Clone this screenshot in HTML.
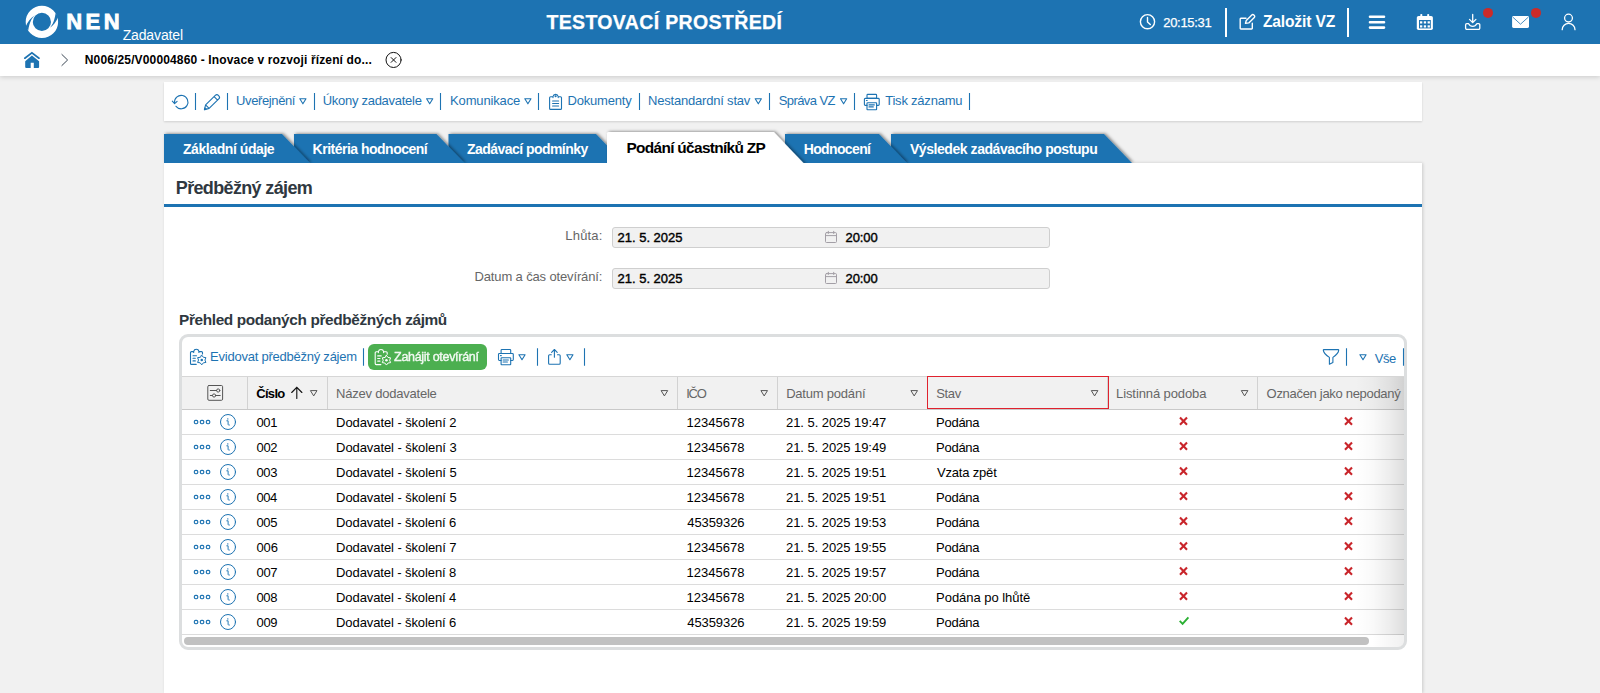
<!DOCTYPE html>
<html lang="cs"><head><meta charset="utf-8"><title>NEN - Zadavatel</title>
<style>
*{box-sizing:border-box;margin:0;padding:0}
html,body{width:1600px;height:693px;overflow:hidden}
body{background:#f1f1f1;font-family:"Liberation Sans",sans-serif;font-size:13px;color:#000;position:relative}
.t{position:absolute;white-space:nowrap;line-height:1;display:block}
.b{position:absolute}
svg.ov{position:absolute;left:0;top:0;width:1600px;height:693px;pointer-events:none}
</style></head><body>
<div class="b" style="left:0;top:44px;width:1600px;height:32px;background:#fff;box-shadow:0 1px 5px rgba(0,0,0,.17)"></div>
<div class="b" style="left:0;top:0;width:1600px;height:44px;background:#1d73b2"></div>
<div class="b" style="left:164px;top:82px;width:1258px;height:39px;background:#fff;box-shadow:0 1px 2px rgba(0,0,0,.14)"></div>
<div class="b" style="left:164px;top:163px;width:1258px;height:530px;background:#fff;box-shadow:1px 0 3px rgba(0,0,0,.16)"></div>
<div class="b" style="left:164px;top:204px;width:1258px;height:3px;background:#1d73b2"></div>
<!-- header separators + badges -->
<div class="b" style="left:1225px;top:8px;width:2px;height:28.500px;background:#fff"></div>
<div class="b" style="left:1347px;top:8px;width:2px;height:28.500px;background:#fff"></div>
<!-- form fields -->
<div class="b" style="left:612px;top:227px;width:438px;height:21px;background:#f1f1f1;border:1px solid #cfcfcf;border-radius:3px"></div>
<div class="b" style="left:612px;top:268px;width:438px;height:21px;background:#f1f1f1;border:1px solid #cfcfcf;border-radius:3px"></div>
<!-- grid -->
<div class="b" style="left:179px;top:334px;width:1228px;height:316px;border:3px solid #dcdedf;border-radius:9px;background:#fff;overflow:hidden">
  <div class="b" style="left:0;top:39px;width:1222px;height:34px;background:#f1f1f1;border-top:1px solid #d6d6d6;border-bottom:1px solid #c9c9c9"></div>
  <div class="b" style="left:65px;top:40px;width:1px;height:32px;background:#d2d2d2"></div>
  <div class="b" style="left:145px;top:40px;width:1px;height:32px;background:#d2d2d2"></div>
  <div class="b" style="left:495px;top:40px;width:1px;height:32px;background:#d2d2d2"></div>
  <div class="b" style="left:595px;top:40px;width:1px;height:32px;background:#d2d2d2"></div>
  <div class="b" style="left:925px;top:40px;width:1px;height:32px;background:#d2d2d2"></div>
  <div class="b" style="left:1075px;top:40px;width:1px;height:32px;background:#d2d2d2"></div>
  <div class="b" style="left:745px;top:39px;width:182px;height:33px;border:1px solid #e0222e"></div>
  <div class="b" style="left:0;top:97px;width:1222px;height:1px;background:#dcdcdc"></div>
  <div class="b" style="left:0;top:122px;width:1222px;height:1px;background:#dcdcdc"></div>
  <div class="b" style="left:0;top:147px;width:1222px;height:1px;background:#dcdcdc"></div>
  <div class="b" style="left:0;top:172px;width:1222px;height:1px;background:#dcdcdc"></div>
  <div class="b" style="left:0;top:197px;width:1222px;height:1px;background:#dcdcdc"></div>
  <div class="b" style="left:0;top:222px;width:1222px;height:1px;background:#dcdcdc"></div>
  <div class="b" style="left:0;top:247px;width:1222px;height:1px;background:#dcdcdc"></div>
  <div class="b" style="left:0;top:272px;width:1222px;height:1px;background:#dcdcdc"></div>
  <div class="b" style="left:0;top:297px;width:1222px;height:1px;background:#dcdcdc"></div>
  <div class="b" style="left:2px;top:300px;width:1185px;height:8px;border-radius:4px;background:#c1c1c1"></div>
  <div class="b" style="left:1174px;top:40px;width:48px;height:258px;background:linear-gradient(to right,rgba(0,0,0,0),rgba(0,0,0,.025) 35%,rgba(0,0,0,.07) 70%,rgba(0,0,0,.13))"></div>
  <div class="b" style="left:1190px;top:298px;width:32px;height:12px;background:linear-gradient(to right,rgba(0,0,0,0),rgba(0,0,0,.06))"></div>
</div>
<div class="b" style="left:367.500px;top:343.700px;width:119px;height:26.200px;background:#4caf50;border-radius:6px"></div>
<svg class="ov" viewBox="0 0 1600 693" fill="none" stroke-linecap="round" stroke-linejoin="round">
<defs>
<filter id="ts" x="-10%" y="-30%" width="130%" height="160%"><feDropShadow dx="1.5" dy="-0.5" stdDeviation="1.5" flood-color="#000" flood-opacity=".45"/></filter>
<path id="tri" d="M0 0H6.200L3.100 5Z"/>
<g id="prn"><rect x="3" y=".5" width="9.6" height="4" rx=".8"/><path d="M3 11.5H1.3a.9.9 0 0 1-.9-.9V5.4a.9.9 0 0 1 .9-.9H14.3a.9.9 0 0 1 .9.9V10.6a.9.9 0 0 1-.9.9H12.6"/><rect x="3" y="8.8" width="9.6" height="7" rx=".5"/><path d="M5 11H10.3M5 13H9.3M2.4 6.6H3.2"/></g>
<g id="xm"><path d="M0 0L7 7.200M7 0L0 7.200"/></g>
<g id="ri"><g stroke-width="1.150"><rect x="-33.700" y="-1.600" width="3.500" height="3.300" rx="1.400"/><rect x="-27.700" y="-1.600" width="3.500" height="3.300" rx="1.400"/><rect x="-21.700" y="-1.600" width="3.500" height="3.300" rx="1.400"/></g><circle cx="0" cy="0" r="7.500"/><path d="M-1.200 -1.200H.100V2.400Q.100 3.400 1.400 3.100" stroke-width=".95"/><circle cx="-.200" cy="-3.100" r=".700" fill="#1d73b2" stroke="none"/></g>
</defs>
<!-- tabs -->
<g filter="url(#ts)" fill="#1d73b2"><path d="M891 163V134H1104L1132 163Z"/></g>
<g filter="url(#ts)" fill="#1d73b2"><path d="M785 163V134H879L907 163Z"/></g>
<g filter="url(#ts)" fill="#1d73b2"><path d="M448.500 163V134H596L624 163Z"/></g>
<g filter="url(#ts)" fill="#1d73b2"><path d="M294 163V134H436.500L464.500 163Z"/></g>
<g filter="url(#ts)" fill="#1d73b2"><path d="M164 163V134H282L310 163Z"/></g>
<g filter="url(#ts)" fill="#fff"><path d="M607 165V133.500Q607 132 608.500 132H773.800L805.300 165Z"/></g>
<rect x="164" y="163" width="1258" height="6" fill="#fff"/>
<!-- logo -->
<g>
<circle cx="41.900" cy="21.900" r="12.650" stroke="#fff" stroke-width="7.100"/>
<path d="M25.40 27.20C27.50 22.00 30.50 18.00 35.00 15.20C32.00 17.60 29.60 21.50 28.20 30.60Z" fill="#1d73b2" stroke="none"/>
<path d="M58.40 16.60C56.30 21.80 53.30 25.80 48.80 28.60C51.80 26.20 54.20 22.30 55.60 13.20Z" fill="#1d73b2" stroke="none"/>
</g>
<!-- header icons -->
<g stroke="#fff" stroke-width="1.400">
<circle cx="1147.500" cy="21.700" r="7.100"/><path d="M1147.500 17.400V21.900L1150.300 24.600"/>
<path d="M1246 18.300H1240.900a.700.700 0 0 0-.700.700V28.300a.700.700 0 0 0 .700.700H1251.600a.700.700 0 0 0 .700-.700V23.200"/>
<path d="M1245.500 23.300L1246.300 20.400L1251.800 14.900a1.400 1.400 0 0 1 2 0L1254.300 15.400a1.400 1.400 0 0 1 0 2L1248.800 22.900Z"/>
</g>
<g stroke="#fff" stroke-width="2.600"><path d="M1370 16.800H1384M1370 22.200H1384M1370 27.600H1384"/></g>
<!-- calendar -->
<g fill="#fff" stroke="none"><rect x="1416.800" y="16.100" width="16.100" height="13.800" rx="1.700"/><rect x="1420.300" y="14" width="2" height="4" rx=".8"/><rect x="1427.200" y="14" width="2" height="4" rx=".8"/></g>
<rect x="1419" y="20" width="11.800" height="8.400" fill="#1d73b2"/>
<g fill="#fff" stroke="none"><rect x="1420" y="21.300" width="2.300" height="2.200"/><rect x="1423.800" y="21.300" width="2.300" height="2.200"/><rect x="1427.600" y="21.300" width="2.300" height="2.200"/><rect x="1420" y="25.300" width="2.300" height="2.200"/><rect x="1423.800" y="25.300" width="2.300" height="2.200"/><rect x="1427.600" y="25.300" width="2.300" height="2.200"/></g>
<!-- inbox download -->
<g stroke="#fff" stroke-width="1.300"><path d="M1472.700 14.500V22.400M1469.500 19.400L1472.700 22.600L1475.900 19.400"/>
<path d="M1466.800 23.700H1468.600Q1470 26.400 1472.700 26.400Q1475.400 26.400 1476.800 23.700H1478.600a1.200 1.200 0 0 1 1.200 1.200V28.100a1.200 1.200 0 0 1-1.200 1.200H1466.800a1.200 1.200 0 0 1-1.200-1.200V24.900a1.200 1.200 0 0 1 1.200-1.200Z"/></g>
<circle cx="1488" cy="12.900" r="5" fill="#cb2b29"/>
<!-- envelope -->
<rect x="1512.100" y="16" width="16.900" height="11.900" rx="1.400" fill="#fff"/>
<path d="M1513 17.300L1520.500 24.200L1528.100 17.300" stroke="#1d73b2" stroke-width=".8"/>
<circle cx="1536" cy="12.900" r="5" fill="#cb2b29"/>
<!-- user -->
<g stroke="#fff" stroke-width="1.300"><circle cx="1568.500" cy="18.100" r="3.900"/><path d="M1562.200 29.700A6.400 6.400 0 0 1 1575 29.700"/></g>
<!-- breadcrumb -->
<path d="M24.800 58.200L31.900 52.800L39 58.200" stroke="#1d73b2" stroke-width="1.700" stroke-linejoin="miter"/>
<path d="M31.900 55.600L39.100 61.200V66.900a1 1 0 0 1-1 1H33.800V62.800H30.700V67.900H26.200a1 1 0 0 1-1-1V61.200Z" fill="#1d73b2" stroke="none"/>
<path d="M61.600 54.200L67.600 60L61.600 65.800" stroke="#3a4653" stroke-width="1" stroke-linejoin="miter" stroke-linecap="butt"/>
<circle cx="393.550" cy="59.950" r="7.550" stroke="#111" stroke-width="1"/>
<path d="M391.150 57.550L395.950 62.350M395.950 57.550L391.150 62.350" stroke="#111" stroke-width="1"/>
<!-- toolbar -->
<g stroke="#1d73b2" stroke-width="1.100">
<path d="M174.600 103A6.700 6.700 0 1 1 176 106.300"/><path d="M172.300 101.100L174.600 103.600L177.100 101.300"/>
<path d="M204.400 109.600L205.600 104.900L215.300 95.400a2.200 2.200 0 0 1 3.100 0L218.800 95.800a2.200 2.200 0 0 1 0 3.100L209.100 108.400ZM205.600 104.900L209.100 108.400M214.100 96.600L217.600 100.100"/>
<path d="M204.500 109.500L205 107.600L206.400 109Z" fill="#1d73b2" stroke-width=".6"/>
<path stroke-linecap="butt" d="M195.500 93V110M227.500 93V110M314.500 93V110M440.500 93V110M538.500 93V110M639.500 93V110M769.500 93V110M854.500 93V110M969.500 93V110"/>
<use href="#tri" x="299.800" y="98.800"/><use href="#tri" x="426.600" y="98.800"/><use href="#tri" x="524.800" y="98.800"/><use href="#tri" x="755.200" y="98.800"/><use href="#tri" x="840.500" y="98.800"/>
<path d="M553 96.800H550.600a1 1 0 0 0-1 1V108.400a1 1 0 0 0 1 1H560.500a1 1 0 0 0 1-1V97.800a1 1 0 0 0-1-1H558.200M553 97.600V96.500Q553.400 94.400 555.600 94.400Q557.800 94.400 558.200 96.500V97.600"/>
<path d="M552.600 101H558.600M552.600 103.500H558.600M552.600 106H558.600"/><circle cx="555.600" cy="96.300" r=".5" fill="#1d73b2"/>
<use href="#prn" x="864" y="93.900"/>
<!-- grid toolbar -->
<path stroke-linecap="butt" d="M363.500 348.200V365.700M537.500 348.200V365.700M584.500 348.200V365.700M1346.500 348.200V365.700M1403.500 348.200V365.700"/>
<use href="#prn" x="498.100" y="349"/>
<use href="#tri" x="518.900" y="354.700"/><use href="#tri" x="566.800" y="354.700"/><use href="#tri" x="1359.900" y="354.700"/>
<path d="M551.300 354.700H549.600a1 1 0 0 0-1 1V363.300a1 1 0 0 0 1 1H559.200a1 1 0 0 0 1-1V355.700a1 1 0 0 0-1-1H557.500M554.400 357.200V349.700M551.600 352.300L554.400 349.500L557.200 352.300"/>
<path d="M1323.800 349.600H1338.200Q1338.700 349.600 1338.700 350.100C1338.500 353.400 1335.300 355.800 1332.900 357.400V362.600L1329.400 364.300V357.400C1327 355.800 1323.500 353.400 1323.300 350.100Q1323.300 349.600 1323.800 349.600Z"/>
<!-- evidovat icon -->
<g id="evi"><path d="M6.500 15.400H1.800a1 1 0 0 1-1-1V3.600a1 1 0 0 1 1-1H4M9.200 2.600H11.800a1 1 0 0 1 1 1V5M4 3.400V2.300Q4.400.3 6.600.3Q8.800.3 9.200 2.300V3.400M3.300 6.700H6.800M3.300 9.300H5.600M3.300 11.900H5.600" transform="translate(189.700 349)"/>
<path d="M201.75 355.25L203.35 357.28L205.91 357.65L204.95 360.05L205.91 362.45L203.35 362.82L201.75 364.85L200.15 362.82L197.59 362.45L198.55 360.05L197.59 357.65L200.15 357.28Z" stroke-width="1"/><circle cx="201.750" cy="360.050" r="1.250" fill="#1d73b2" stroke="none"/></g>
</g>
<!-- green button icon -->
<g stroke="#fff" stroke-width="1.100"><path d="M6.500 15.400H1.800a1 1 0 0 1-1-1V3.600a1 1 0 0 1 1-1H4M9.200 2.600H11.800a1 1 0 0 1 1 1V5M4 3.400V2.300Q4.400.3 6.600.3Q8.800.3 9.200 2.300V3.400M3.300 6.700H6.800M3.300 9.300H5.600M3.300 11.900H5.600" transform="translate(374.400 349.200)"/>
<path d="M386.45 355.45L388.05 357.48L390.61 357.85L389.65 360.25L390.61 362.65L388.05 363.02L386.45 365.05L384.85 363.02L382.29 362.65L383.25 360.25L382.29 357.85L384.85 357.48Z" stroke-width="1"/><circle cx="386.450" cy="360.250" r="1.250" fill="#fff" stroke="none"/></g>
<!-- grid header icons -->
<g stroke="#555" stroke-width="1"><rect x="207.800" y="385.500" width="14.800" height="14.800" rx="1.200"/><path d="M210.300 390.500H216.600M210.300 395.500H212.400M215.800 395.500H220.200"/><circle cx="218.200" cy="390.500" r="1.600"/><circle cx="214.100" cy="395.500" r="1.600"/>
<use href="#tri" x="310.800" y="390.600"/><use href="#tri" x="661.5" y="390.600"/><use href="#tri" x="761.3" y="390.600"/><use href="#tri" x="911.3" y="390.600"/><use href="#tri" x="1091.7" y="390.600"/><use href="#tri" x="1241.7" y="390.600"/></g>
<path d="M296.800 398.400V387.300M291.700 392.500L296.800 387.300L301.900 392.500" stroke="#111" stroke-width="1.100" stroke-linejoin="miter"/>
<!-- calendar icons in fields -->
<g stroke="#a39fa6" stroke-width="1"><rect x="825.500" y="232.600" width="11" height="9.900" rx="1"/><path d="M825.500 235.600H836.500M828.300 231.300V233.500M833.700 231.300V233.500"/>
<rect x="825.500" y="273.600" width="11" height="9.900" rx="1"/><path d="M825.500 276.600H836.500M828.300 272.300V274.500M833.700 272.300V274.500"/></g>
<use href="#ri" x="228" y="422" stroke="#1d73b2" stroke-width="1"/>
<use href="#xm" x="1180" y="417.6" stroke="#c9252b" stroke-width="2.100" stroke-linecap="butt"/>
<use href="#xm" x="1345" y="417.6" stroke="#c9252b" stroke-width="2.100" stroke-linecap="butt"/>
<use href="#ri" x="228" y="447" stroke="#1d73b2" stroke-width="1"/>
<use href="#xm" x="1180" y="442.6" stroke="#c9252b" stroke-width="2.100" stroke-linecap="butt"/>
<use href="#xm" x="1345" y="442.6" stroke="#c9252b" stroke-width="2.100" stroke-linecap="butt"/>
<use href="#ri" x="228" y="472" stroke="#1d73b2" stroke-width="1"/>
<use href="#xm" x="1180" y="467.6" stroke="#c9252b" stroke-width="2.100" stroke-linecap="butt"/>
<use href="#xm" x="1345" y="467.6" stroke="#c9252b" stroke-width="2.100" stroke-linecap="butt"/>
<use href="#ri" x="228" y="497" stroke="#1d73b2" stroke-width="1"/>
<use href="#xm" x="1180" y="492.6" stroke="#c9252b" stroke-width="2.100" stroke-linecap="butt"/>
<use href="#xm" x="1345" y="492.6" stroke="#c9252b" stroke-width="2.100" stroke-linecap="butt"/>
<use href="#ri" x="228" y="522" stroke="#1d73b2" stroke-width="1"/>
<use href="#xm" x="1180" y="517.6" stroke="#c9252b" stroke-width="2.100" stroke-linecap="butt"/>
<use href="#xm" x="1345" y="517.6" stroke="#c9252b" stroke-width="2.100" stroke-linecap="butt"/>
<use href="#ri" x="228" y="547" stroke="#1d73b2" stroke-width="1"/>
<use href="#xm" x="1180" y="542.6" stroke="#c9252b" stroke-width="2.100" stroke-linecap="butt"/>
<use href="#xm" x="1345" y="542.6" stroke="#c9252b" stroke-width="2.100" stroke-linecap="butt"/>
<use href="#ri" x="228" y="572" stroke="#1d73b2" stroke-width="1"/>
<use href="#xm" x="1180" y="567.6" stroke="#c9252b" stroke-width="2.100" stroke-linecap="butt"/>
<use href="#xm" x="1345" y="567.6" stroke="#c9252b" stroke-width="2.100" stroke-linecap="butt"/>
<use href="#ri" x="228" y="597" stroke="#1d73b2" stroke-width="1"/>
<use href="#xm" x="1180" y="592.6" stroke="#c9252b" stroke-width="2.100" stroke-linecap="butt"/>
<use href="#xm" x="1345" y="592.6" stroke="#c9252b" stroke-width="2.100" stroke-linecap="butt"/>
<use href="#ri" x="228" y="622" stroke="#1d73b2" stroke-width="1"/>
<path d="M1179.700 620.9L1182.600 623.8L1188.400 617.4" stroke="#2bb033" stroke-width="1.900" stroke-linecap="butt" stroke-linejoin="miter"/>
<use href="#xm" x="1345" y="617.6" stroke="#c9252b" stroke-width="2.100" stroke-linecap="butt"/>

</svg>
<span class="t" style="left:66.24px;top:10.68px;font-size:22px;font-weight:700;color:#fff;letter-spacing:3.447px;-webkit-text-stroke:.8px #fff;">NEN</span>
<span class="t" style="left:122.65px;top:28.05px;font-size:14px;color:#fff;letter-spacing:-0.130px;">Zadavatel</span>
<span class="t" style="left:546.38px;top:12.74px;font-size:19.5px;font-weight:700;color:#fff;letter-spacing:0.363px;-webkit-text-stroke:.25px #fff;">TESTOVACÍ PROSTŘEDÍ</span>
<span class="t" style="left:1163.29px;top:16.00px;font-size:13px;color:#fff;letter-spacing:-0.320px;-webkit-text-stroke:.25px #fff;">20:15:31</span>
<span class="t" style="left:1262.89px;top:13.99px;font-size:15.6px;font-weight:700;color:#fff;letter-spacing:-0.151px;">Založit VZ</span>
<span class="t" style="left:84.81px;top:54.04px;font-size:12px;font-weight:700;color:#000;letter-spacing:0.140px;">N006/25/V00004860 - Inovace v rozvoji řízení do...</span>
<span class="t" style="left:236.10px;top:93.90px;font-size:13px;color:#1d73b2;letter-spacing:-0.394px;">Uveřejnění</span>
<span class="t" style="left:322.71px;top:93.90px;font-size:13px;color:#1d73b2;letter-spacing:-0.278px;">Úkony zadavatele</span>
<span class="t" style="left:450.09px;top:93.90px;font-size:13px;color:#1d73b2;letter-spacing:-0.155px;">Komunikace</span>
<span class="t" style="left:567.60px;top:93.90px;font-size:13px;color:#1d73b2;letter-spacing:-0.212px;">Dokumenty</span>
<span class="t" style="left:648.09px;top:93.90px;font-size:13px;color:#1d73b2;letter-spacing:-0.203px;">Nestandardní stav</span>
<span class="t" style="left:778.69px;top:93.90px;font-size:13px;color:#1d73b2;letter-spacing:-0.569px;">Správa VZ</span>
<span class="t" style="left:885.22px;top:93.90px;font-size:13px;color:#1d73b2;letter-spacing:-0.222px;">Tisk záznamu</span>
<span class="t" style="left:183.01px;top:142.15px;font-size:14px;font-weight:700;color:#fff;letter-spacing:-0.430px;">Základní údaje</span>
<span class="t" style="left:312.58px;top:142.15px;font-size:14px;font-weight:700;color:#fff;letter-spacing:-0.502px;">Kritéria hodnocení</span>
<span class="t" style="left:467.01px;top:142.15px;font-size:14px;font-weight:700;color:#fff;letter-spacing:-0.544px;">Zadávací podmínky</span>
<span class="t" style="left:803.72px;top:142.15px;font-size:14px;font-weight:700;color:#fff;letter-spacing:-0.634px;">Hodnocení</span>
<span class="t" style="left:909.95px;top:142.15px;font-size:14px;font-weight:700;color:#fff;letter-spacing:-0.438px;">Výsledek zadávacího postupu</span>
<span class="t" style="left:626.44px;top:140.16px;font-size:15.4px;font-weight:700;color:#000;letter-spacing:-0.666px;">Podání účastníků ZP</span>
<span class="t" style="left:175.81px;top:178.96px;font-size:18px;font-weight:700;color:#2f3840;letter-spacing:-0.649px;">Předběžný zájem</span>
<span class="t" style="left:565.33px;top:229.00px;font-size:13px;color:#666;letter-spacing:0.176px;">Lhůta:</span>
<span class="t" style="left:474.51px;top:270.00px;font-size:13px;color:#666;letter-spacing:-0.138px;">Datum a čas otevírání:</span>
<span class="t" style="left:617.59px;top:231.20px;font-size:13px;color:#000;letter-spacing:-0.015px;-webkit-text-stroke:.4px #000;">21. 5. 2025</span>
<span class="t" style="left:845.59px;top:231.20px;font-size:13px;color:#000;letter-spacing:-0.108px;-webkit-text-stroke:.4px #000;">20:00</span>
<span class="t" style="left:617.59px;top:272.20px;font-size:13px;color:#000;letter-spacing:-0.015px;-webkit-text-stroke:.4px #000;">21. 5. 2025</span>
<span class="t" style="left:845.59px;top:272.20px;font-size:13px;color:#000;letter-spacing:-0.108px;-webkit-text-stroke:.4px #000;">20:00</span>
<span class="t" style="left:179.00px;top:312.16px;font-size:15.4px;font-weight:700;color:#2f3840;letter-spacing:-0.371px;">Přehled podaných předběžných zájmů</span>
<span class="t" style="left:210.09px;top:349.60px;font-size:13px;color:#1d73b2;letter-spacing:-0.237px;">Evidovat předběžný zájem</span>
<span class="t" style="left:394.08px;top:350.82px;font-size:12.5px;color:#fff;letter-spacing:-0.300px;-webkit-text-stroke:.38px #fff;opacity:.93;">Zahájit otevírání</span>
<span class="t" style="left:1374.73px;top:352.30px;font-size:13px;color:#1d73b2;letter-spacing:-0.418px;">Vše</span>
<span class="t" style="left:256.22px;top:386.80px;font-size:13px;font-weight:700;color:#000;letter-spacing:-0.676px;">Číslo</span>
<span class="t" style="left:336.09px;top:386.80px;font-size:13px;color:#666;letter-spacing:-0.220px;">Název dodavatele</span>
<span class="t" style="left:686.28px;top:386.80px;font-size:13px;color:#666;letter-spacing:-1.300px;">IČO</span>
<span class="t" style="left:786.17px;top:386.80px;font-size:13px;color:#666;letter-spacing:-0.209px;">Datum podání</span>
<span class="t" style="left:936.21px;top:386.80px;font-size:13px;color:#666;letter-spacing:-0.318px;">Stav</span>
<span class="t" style="left:1116.07px;top:386.80px;font-size:13px;color:#666;letter-spacing:-0.102px;">Listinná podoba</span>
<span class="t" style="left:1266.61px;top:386.80px;font-size:13px;color:#666;letter-spacing:-0.307px;">Označen jako nepodaný</span>
<span class="t" style="left:256.43px;top:415.60px;font-size:13px;color:#000;letter-spacing:-0.304px;">001</span>
<span class="t" style="left:336.09px;top:415.60px;font-size:13px;color:#000;letter-spacing:-0.083px;">Dodavatel - školení 2</span>
<span class="t" style="left:686.48px;top:415.60px;font-size:13px;color:#000;letter-spacing:0.023px;">12345678</span>
<span class="t" style="left:785.99px;top:415.60px;font-size:13px;color:#000;letter-spacing:-0.052px;">21. 5. 2025 19:47</span>
<span class="t" style="left:936.07px;top:415.60px;font-size:13px;color:#000;letter-spacing:-0.268px;">Podána</span>
<span class="t" style="left:256.43px;top:440.60px;font-size:13px;color:#000;letter-spacing:-0.263px;">002</span>
<span class="t" style="left:336.09px;top:440.60px;font-size:13px;color:#000;letter-spacing:-0.078px;">Dodavatel - školení 3</span>
<span class="t" style="left:686.48px;top:440.60px;font-size:13px;color:#000;letter-spacing:0.023px;">12345678</span>
<span class="t" style="left:785.99px;top:440.60px;font-size:13px;color:#000;letter-spacing:-0.056px;">21. 5. 2025 19:49</span>
<span class="t" style="left:936.07px;top:440.60px;font-size:13px;color:#000;letter-spacing:-0.268px;">Podána</span>
<span class="t" style="left:256.43px;top:465.60px;font-size:13px;color:#000;letter-spacing:-0.286px;">003</span>
<span class="t" style="left:336.09px;top:465.60px;font-size:13px;color:#000;letter-spacing:-0.077px;">Dodavatel - školení 5</span>
<span class="t" style="left:686.48px;top:465.60px;font-size:13px;color:#000;letter-spacing:0.023px;">12345678</span>
<span class="t" style="left:785.99px;top:465.60px;font-size:13px;color:#000;letter-spacing:-0.057px;">21. 5. 2025 19:51</span>
<span class="t" style="left:936.91px;top:465.60px;font-size:13px;color:#000;letter-spacing:-0.176px;">Vzata zpět</span>
<span class="t" style="left:256.43px;top:490.60px;font-size:13px;color:#000;letter-spacing:-0.414px;">004</span>
<span class="t" style="left:336.09px;top:490.60px;font-size:13px;color:#000;letter-spacing:-0.077px;">Dodavatel - školení 5</span>
<span class="t" style="left:686.48px;top:490.60px;font-size:13px;color:#000;letter-spacing:0.023px;">12345678</span>
<span class="t" style="left:785.99px;top:490.60px;font-size:13px;color:#000;letter-spacing:-0.057px;">21. 5. 2025 19:51</span>
<span class="t" style="left:936.07px;top:490.60px;font-size:13px;color:#000;letter-spacing:-0.268px;">Podána</span>
<span class="t" style="left:256.43px;top:515.60px;font-size:13px;color:#000;letter-spacing:-0.282px;">005</span>
<span class="t" style="left:336.09px;top:515.60px;font-size:13px;color:#000;letter-spacing:-0.096px;">Dodavatel - školení 6</span>
<span class="t" style="left:687.22px;top:515.60px;font-size:13px;color:#000;letter-spacing:-0.073px;">45359326</span>
<span class="t" style="left:785.99px;top:515.60px;font-size:13px;color:#000;letter-spacing:-0.057px;">21. 5. 2025 19:53</span>
<span class="t" style="left:936.07px;top:515.60px;font-size:13px;color:#000;letter-spacing:-0.268px;">Podána</span>
<span class="t" style="left:256.43px;top:540.60px;font-size:13px;color:#000;letter-spacing:-0.124px;">006</span>
<span class="t" style="left:336.09px;top:540.60px;font-size:13px;color:#000;letter-spacing:-0.083px;">Dodavatel - školení 7</span>
<span class="t" style="left:686.48px;top:540.60px;font-size:13px;color:#000;letter-spacing:0.023px;">12345678</span>
<span class="t" style="left:785.99px;top:540.60px;font-size:13px;color:#000;letter-spacing:-0.057px;">21. 5. 2025 19:55</span>
<span class="t" style="left:936.07px;top:540.60px;font-size:13px;color:#000;letter-spacing:-0.268px;">Podána</span>
<span class="t" style="left:256.43px;top:565.60px;font-size:13px;color:#000;letter-spacing:-0.263px;">007</span>
<span class="t" style="left:336.09px;top:565.60px;font-size:13px;color:#000;letter-spacing:-0.095px;">Dodavatel - školení 8</span>
<span class="t" style="left:686.48px;top:565.60px;font-size:13px;color:#000;letter-spacing:0.023px;">12345678</span>
<span class="t" style="left:785.99px;top:565.60px;font-size:13px;color:#000;letter-spacing:-0.052px;">21. 5. 2025 19:57</span>
<span class="t" style="left:936.07px;top:565.60px;font-size:13px;color:#000;letter-spacing:-0.268px;">Podána</span>
<span class="t" style="left:256.43px;top:590.60px;font-size:13px;color:#000;letter-spacing:-0.296px;">008</span>
<span class="t" style="left:336.09px;top:590.60px;font-size:13px;color:#000;letter-spacing:-0.093px;">Dodavatel - školení 4</span>
<span class="t" style="left:686.48px;top:590.60px;font-size:13px;color:#000;letter-spacing:0.023px;">12345678</span>
<span class="t" style="left:785.99px;top:590.60px;font-size:13px;color:#000;letter-spacing:-0.057px;">21. 5. 2025 20:00</span>
<span class="t" style="left:936.07px;top:590.60px;font-size:13px;color:#000;letter-spacing:-0.031px;">Podána po lhůtě</span>
<span class="t" style="left:256.43px;top:615.60px;font-size:13px;color:#000;letter-spacing:-0.271px;">009</span>
<span class="t" style="left:336.09px;top:615.60px;font-size:13px;color:#000;letter-spacing:-0.096px;">Dodavatel - školení 6</span>
<span class="t" style="left:687.22px;top:615.60px;font-size:13px;color:#000;letter-spacing:-0.073px;">45359326</span>
<span class="t" style="left:785.99px;top:615.60px;font-size:13px;color:#000;letter-spacing:-0.056px;">21. 5. 2025 19:59</span>
<span class="t" style="left:936.07px;top:615.60px;font-size:13px;color:#000;letter-spacing:-0.268px;">Podána</span>
</body></html>
